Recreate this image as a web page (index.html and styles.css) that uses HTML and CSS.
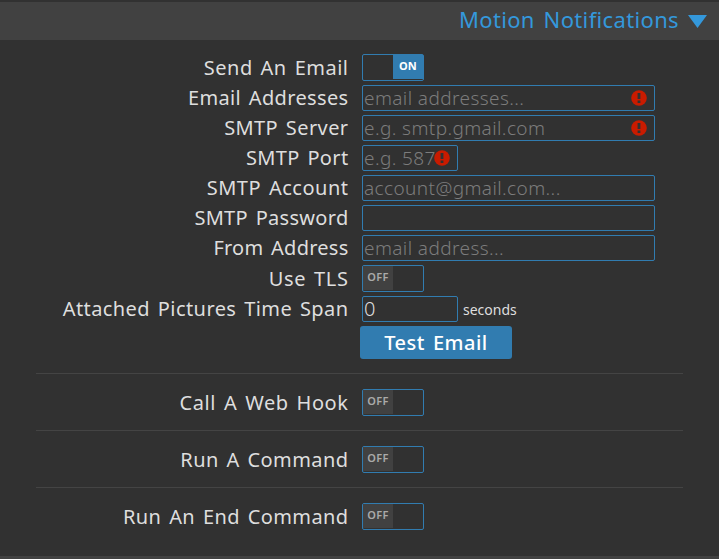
FILE: index.html
```html
<!DOCTYPE html>
<html lang="en"><head><meta charset="utf-8"><title>Motion Notifications</title><link rel="stylesheet" href="styles.css"></head>
<body>
<header class="section-title"><span class="title-text">Motion Notifications</span><svg class="arrow" viewBox="0 0 19 13"><path d="M0 0H19L9.5 13Z"/></svg></header>
<main class="settings">
<div class="row toggle-row"><label class="label l-send">Send An Email</label><div class="switch on"><span>ON</span></div></div>
<div class="row"><label class="label l-addresses">Email Addresses</label><div class="field"><span>email addresses...</span><svg class="error" viewBox="0 0 16 16"><circle cx="8" cy="8" r="7.8"/><path d="M6.6 3h2.8v6H6.6zM6.6 10.5h2.8V13H6.6z"/></svg></div></div>
<div class="row"><label class="label l-server">SMTP Server</label><div class="field"><span>e.g. smtp.gmail.com</span><svg class="error" viewBox="0 0 16 16"><circle cx="8" cy="8" r="7.8"/><path d="M6.6 3h2.8v6H6.6zM6.6 10.5h2.8V13H6.6z"/></svg></div></div>
<div class="row"><label class="label l-port">SMTP Port</label><div class="field short"><span>e.g. 587</span><svg class="error" viewBox="0 0 16 16"><circle cx="8" cy="8" r="7.8"/><path d="M6.6 3h2.8v6H6.6zM6.6 10.5h2.8V13H6.6z"/></svg></div></div>
<div class="row"><label class="label l-account">SMTP Account</label><div class="field"><span>account@gmail.com...</span></div></div>
<div class="row"><label class="label l-password">SMTP Password</label><div class="field"></div></div>
<div class="row"><label class="label l-from">From Address</label><div class="field"><span>email address...</span></div></div>
<div class="row toggle-row"><label class="label l-tls">Use TLS</label><div class="switch"><span>OFF</span></div></div>
<div class="row"><label class="label l-span">Attached Pictures Time Span</label><div class="field short value"><span>0</span></div><span class="unit">seconds</span></div>
<button class="button"><span>Test Email</span></button>
<hr>
<div class="row toggle-row"><label class="label l-hook">Call A Web Hook</label><div class="switch"><span>OFF</span></div></div>
<hr>
<div class="row toggle-row"><label class="label l-run">Run A Command</label><div class="switch"><span>OFF</span></div></div>
<hr>
<div class="row toggle-row"><label class="label l-end">Run An End Command</label><div class="switch"><span>OFF</span></div></div>
</main>
<footer class="next-section"></footer>
</body></html>
```
FILE: styles.css
```css
* { box-sizing: border-box; }
body { margin: 0; height: 559px; padding-top: 2px; overflow: hidden; background: #313131; color: #dedede; font: 20px/30px "Noto Sans", sans-serif; display: flex; flex-direction: column; }
.section-title { height: 38px; flex: none; background: #414141; color: #3498db; display: flex; align-items: center; justify-content: flex-end; padding-right: 12px; gap: 9px; font-size: 22px; }
.title-text { letter-spacing: .35px; word-spacing: 2.7px; padding-bottom: 4px; }
.arrow { width: 19px; height: 13px; fill: currentColor; }
.settings { height: 516px; flex: none; padding: 12px 36px 0; }
.row { display: flex; align-items: center; height: 30px; }
.toggle-row { height: 31px; }
.label { width: 312.5px; margin-right: .5px; flex: none; text-align: right; white-space: nowrap; word-spacing: 2.2px; }
.l-send, .l-account { letter-spacing: .5px; }
.l-addresses, .l-port { letter-spacing: .35px; }
.l-server, .l-end { letter-spacing: .4px; }
.l-password { letter-spacing: .3px; }
.l-from { letter-spacing: .25px; }
.l-tls { letter-spacing: .6px; }
.l-span, .l-run { letter-spacing: .42px; }
.l-hook { letter-spacing: .55px; }
.field { width: 293px; height: 26px; margin-left: 13px; border: 1px solid #317cb0; border-radius: 2px; padding: 0 7px 0 1px; display: flex; align-items: center; justify-content: space-between; color: #7c7c7c; font-size: 19px; line-height: 24px; font-weight: 300; letter-spacing: .4px; white-space: nowrap; }
.short { width: 96px; }
.value { color: #dedede; font-size: 20px; }
.error { width: 16px; height: 16px; flex: none; fill: #c81b00; }
.short .error { margin-left: -6px; }
.error path { fill: #313131; }
.switch { width: 62px; height: 27px; margin-left: 13px; border: 1px solid #317cb0; border-radius: 2px; display: flex; }
.switch span { width: 30px; height: 24px; background: #414141; color: #aaa; font-size: 11px; line-height: 22px; text-align: center; font-weight: 600; letter-spacing: .4px; }
.switch.on { justify-content: flex-end; }
.switch.on span { background: #317cb0; color: #fff; font-weight: 700; letter-spacing: .2px; line-height: 22px; }
.unit { font-size: 14px; margin-left: 5px; padding-top: 1px; }
.button { display: block; width: 152px; height: 33px; margin: 2px 0 14px 324px; padding: 0; border: 0; border-radius: 3px; background: #317cb0; color: #fff; font: 500 20px/31px "Noto Sans", sans-serif; letter-spacing: .5px; word-spacing: 2.2px; }
hr { height: 1px; border: 0; background: #444; margin: 12px 0 13px; }
.next-section { height: 3px; background: #414141; }
```
